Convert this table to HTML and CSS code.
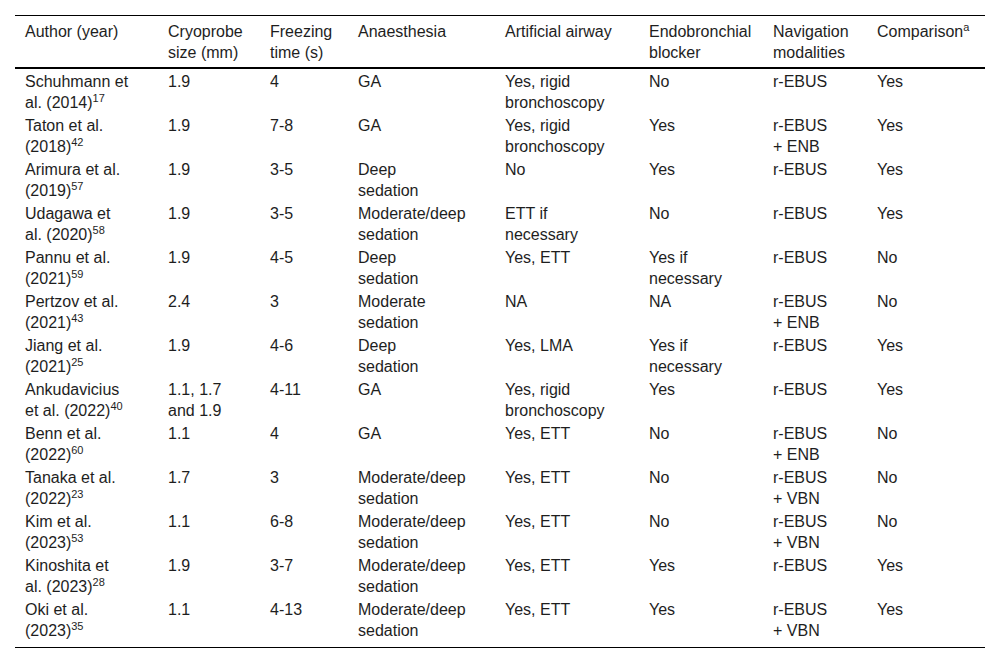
FILE: index.html
```html
<!DOCTYPE html>
<html lang="en">
<head>
<meta charset="utf-8">
<title>Cryobiopsy studies</title>
<link rel="stylesheet" href="styles.css">
</head>
<body>
<table class="data-table">
  <colgroup>
    <col class="c1"><col class="c2"><col class="c3"><col class="c4"><col class="c5"><col class="c6"><col class="c7"><col class="c8">
  </colgroup>
  <thead>
    <tr>
      <th>Author (year)</th>
      <th>Cryoprobe<br>size (mm)</th>
      <th>Freezing<br>time (s)</th>
      <th>Anaesthesia</th>
      <th>Artificial airway</th>
      <th>Endobronchial<br>blocker</th>
      <th>Navigation<br>modalities</th>
      <th>Comparison<sup>a</sup></th>
    </tr>
  </thead>
  <tbody>
    <tr>
      <td>Schuhmann et<br>al. (2014)<sup>17</sup></td><td>1.9</td><td>4</td><td>GA</td><td>Yes, rigid<br>bronchoscopy</td><td>No</td><td>r-EBUS</td><td>Yes</td>
    </tr>
    <tr>
      <td>Taton et al.<br>(2018)<sup>42</sup></td><td>1.9</td><td>7-8</td><td>GA</td><td>Yes, rigid<br>bronchoscopy</td><td>Yes</td><td>r-EBUS<br>+ ENB</td><td>Yes</td>
    </tr>
    <tr>
      <td>Arimura et al.<br>(2019)<sup>57</sup></td><td>1.9</td><td>3-5</td><td>Deep<br>sedation</td><td>No</td><td>Yes</td><td>r-EBUS</td><td>Yes</td>
    </tr>
    <tr>
      <td>Udagawa et<br>al. (2020)<sup>58</sup></td><td>1.9</td><td>3-5</td><td>Moderate/deep<br>sedation</td><td>ETT if<br>necessary</td><td>No</td><td>r-EBUS</td><td>Yes</td>
    </tr>
    <tr>
      <td>Pannu et al.<br>(2021)<sup>59</sup></td><td>1.9</td><td>4-5</td><td>Deep<br>sedation</td><td>Yes, ETT</td><td>Yes if<br>necessary</td><td>r-EBUS</td><td>No</td>
    </tr>
    <tr>
      <td>Pertzov et al.<br>(2021)<sup>43</sup></td><td>2.4</td><td>3</td><td>Moderate<br>sedation</td><td>NA</td><td>NA</td><td>r-EBUS<br>+ ENB</td><td>No</td>
    </tr>
    <tr>
      <td>Jiang et al.<br>(2021)<sup>25</sup></td><td>1.9</td><td>4-6</td><td>Deep<br>sedation</td><td>Yes, LMA</td><td>Yes if<br>necessary</td><td>r-EBUS</td><td>Yes</td>
    </tr>
    <tr>
      <td>Ankudavicius<br>et al. (2022)<sup>40</sup></td><td>1.1, 1.7<br>and 1.9</td><td>4-11</td><td>GA</td><td>Yes, rigid<br>bronchoscopy</td><td>Yes</td><td>r-EBUS</td><td>Yes</td>
    </tr>
    <tr>
      <td>Benn et al.<br>(2022)<sup>60</sup></td><td>1.1</td><td>4</td><td>GA</td><td>Yes, ETT</td><td>No</td><td>r-EBUS<br>+ ENB</td><td>No</td>
    </tr>
    <tr>
      <td>Tanaka et al.<br>(2022)<sup>23</sup></td><td>1.7</td><td>3</td><td>Moderate/deep<br>sedation</td><td>Yes, ETT</td><td>No</td><td>r-EBUS<br>+ VBN</td><td>No</td>
    </tr>
    <tr>
      <td>Kim et al.<br>(2023)<sup>53</sup></td><td>1.1</td><td>6-8</td><td>Moderate/deep<br>sedation</td><td>Yes, ETT</td><td>No</td><td>r-EBUS<br>+ VBN</td><td>No</td>
    </tr>
    <tr>
      <td>Kinoshita et<br>al. (2023)<sup>28</sup></td><td>1.9</td><td>3-7</td><td>Moderate/deep<br>sedation</td><td>Yes, ETT</td><td>Yes</td><td>r-EBUS</td><td>Yes</td>
    </tr>
    <tr>
      <td>Oki et al.<br>(2023)<sup>35</sup></td><td>1.1</td><td>4-13</td><td>Moderate/deep<br>sedation</td><td>Yes, ETT</td><td>Yes</td><td>r-EBUS<br>+ VBN</td><td>Yes</td>
    </tr>
  </tbody>
</table>
</body>
</html>
```

FILE: styles.css
```css
html, body {
  margin: 0;
  padding: 0;
  background: #ffffff;
}

body {
  padding: 15px 15px 0 15px;
  font-family: "Liberation Sans", Arial, sans-serif;
  font-size: 16px;
  color: #1e1e1e;
}

.data-table {
  width: 970px;
  border-collapse: collapse;
  table-layout: fixed;
  border-top: 1px solid #000000;
  border-bottom: 1px solid #000000;
}

.c1 { width: 143px; }
.c2 { width: 102px; }
.c3 { width: 88px; }
.c4 { width: 147px; }
.c5 { width: 144px; }
.c6 { width: 124px; }
.c7 { width: 104px; }
.c8 { width: 118px; }

.data-table th,
.data-table td {
  text-align: left;
  vertical-align: top;
  font-weight: normal;
  line-height: 21px;
  padding: 2px 10px 0 10px;
  white-space: nowrap;
}

.data-table th {
  padding-top: 5px;
  padding-bottom: 4px;
  border-bottom: 2px solid #000000;
}

.data-table tbody tr:last-child td {
  padding-bottom: 6px;
}

.data-table sup {
  font-size: 11px;
  line-height: 0;
  vertical-align: 6px;
}
```
